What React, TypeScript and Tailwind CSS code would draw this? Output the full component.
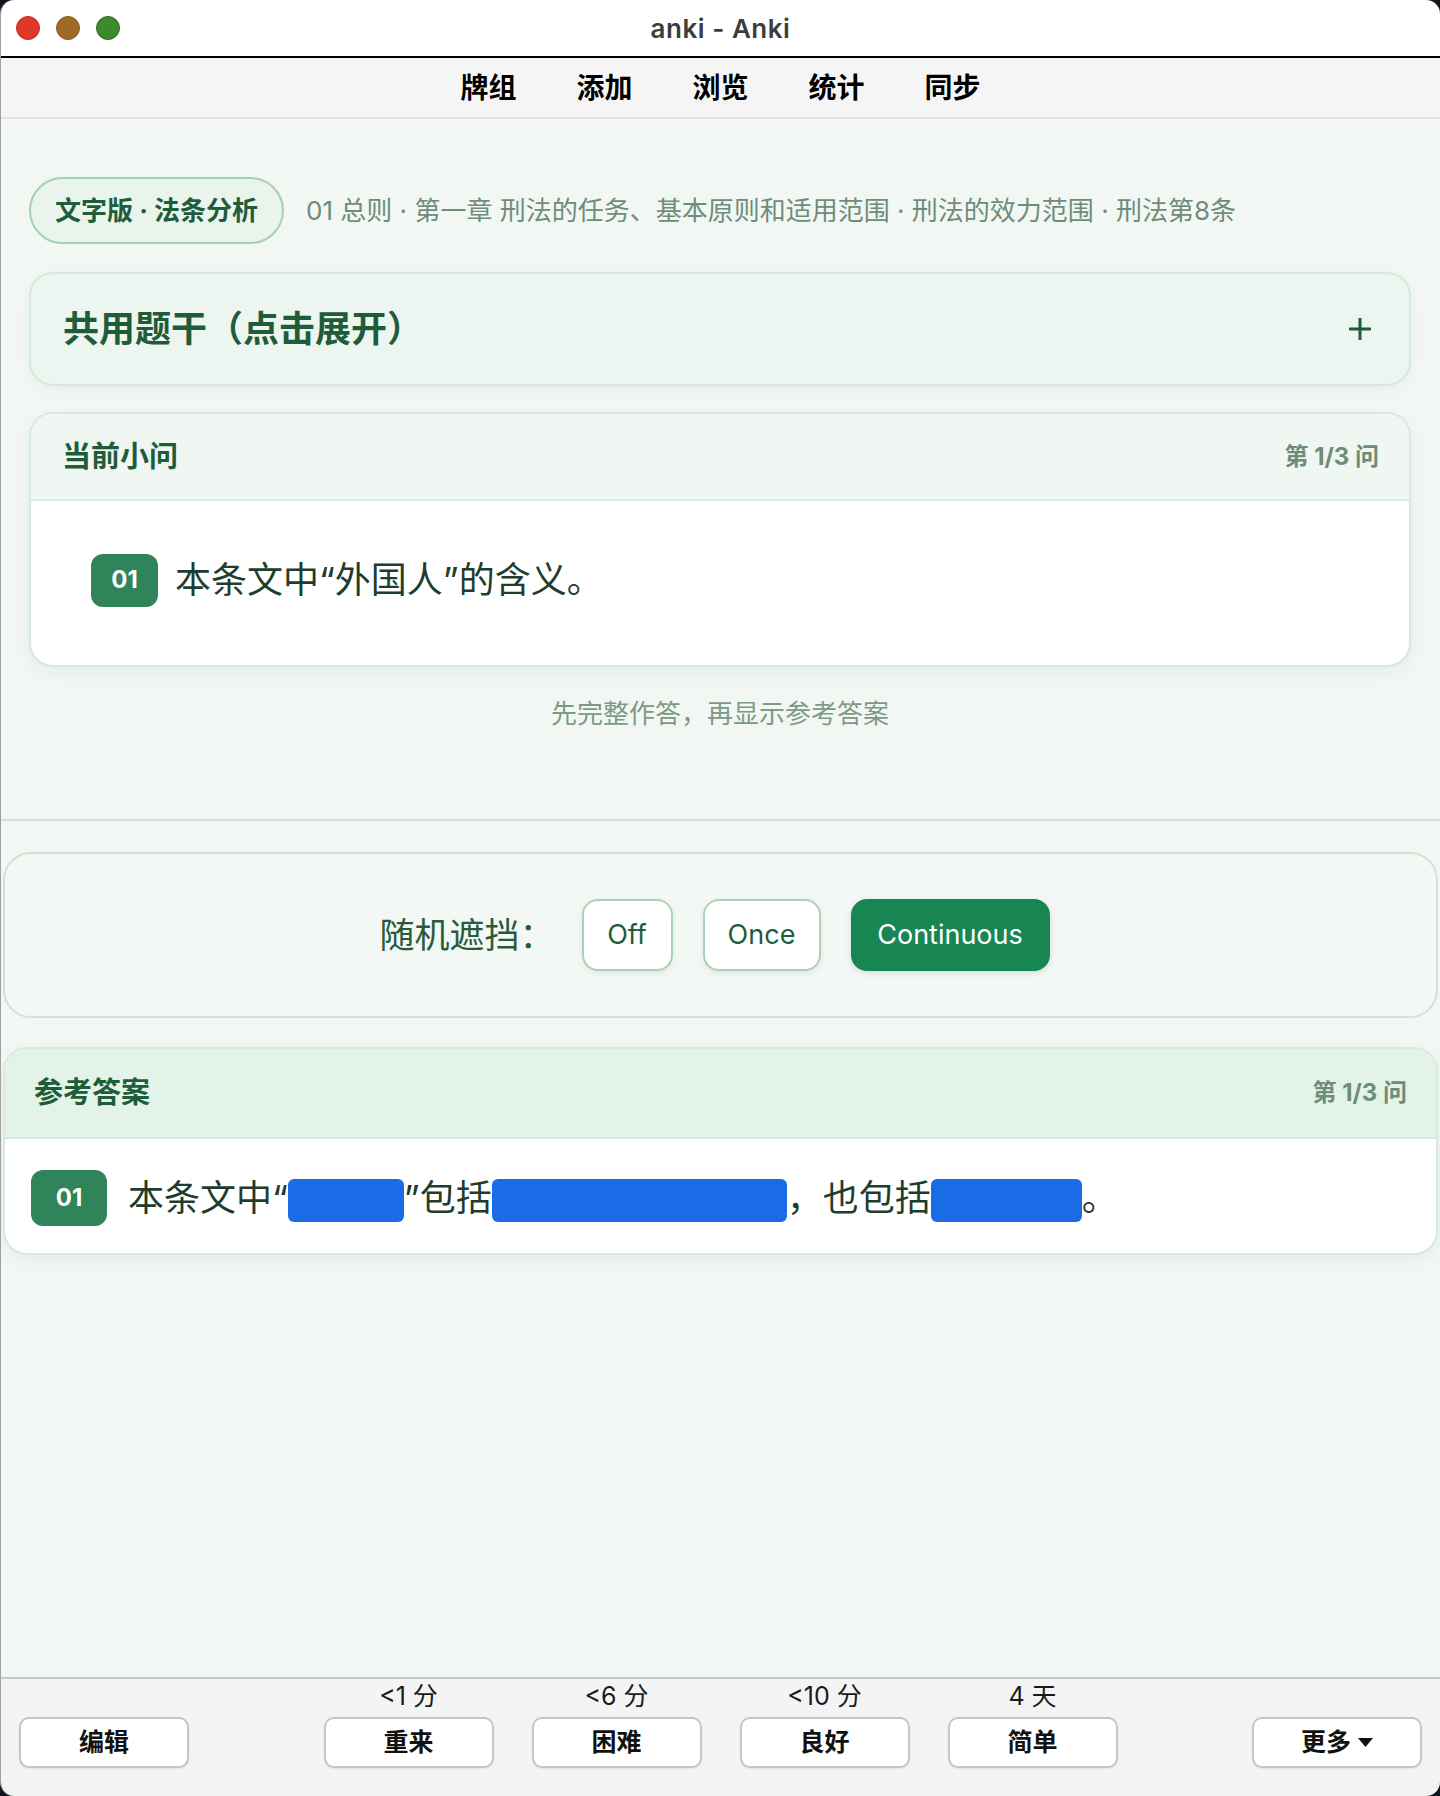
import React from "react";

const Blank = ({ w }: { w: number }) => (
  <span
    className="inline-block h-[43px] rounded-[6px] bg-[#1a6be6] align-middle"
    style={{ width: w }}
  />
);

const BottomBtn = ({ children }: { children: React.ReactNode }) => (
  <button className="flex h-[51px] w-[170px] items-center justify-center rounded-[10px] border-2 border-[#c6c6c6] bg-white text-[25px] font-bold text-[#111] shadow-[0_1px_2px_rgba(0,0,0,0.08)]">
    {children}
  </button>
);

export default function App() {
  const answers = [
    { label: "<1 分", text: "重来" },
    { label: "<6 分", text: "困难" },
    { label: "<10 分", text: "良好" },
    { label: "4 天", text: "简单" },
  ];
  return (
    <div className="h-[1796px] w-[1440px] bg-[#0f1620] font-['Inter','Noto_Sans_CJK_SC',sans-serif]">
      <div className="flex h-full flex-col overflow-hidden rounded-[14px] border-l border-[#a0a0a0]">
        {/* Title bar */}
        <div className="grid h-[56px] shrink-0 grid-cols-[1fr_auto_1fr] items-center bg-white">
          <div className="flex items-center gap-[16px] pl-[15px]">
            <span className="h-[24px] w-[24px] rounded-full border border-[#c52a20] bg-[#e0372b]" />
            <span className="h-[24px] w-[24px] rounded-full border border-[#8a5a1c] bg-[#9c6b27]" />
            <span className="h-[24px] w-[24px] rounded-full border border-[#2c6e1e] bg-[#3c8a2b]" />
          </div>
          <div className="text-[26px] font-semibold tracking-[0.02em] text-[#3d3d3d]">anki - Anki</div>
          <div />
        </div>
        <div className="h-[2px] shrink-0 bg-black" />
        {/* Toolbar */}
        <div className="flex h-[61px] shrink-0 items-center justify-center gap-[60px] border-b-2 border-[#e2e2e2] bg-[#f5f5f5] text-[28px] font-bold text-black">
          <span>牌组</span>
          <span>添加</span>
          <span>浏览</span>
          <span>统计</span>
          <span>同步</span>
        </div>

        {/* Main */}
        <div className="flex flex-1 flex-col bg-[#f2f7f3]">
          <div className="flex h-[702px] flex-col border-b-2 border-[#cfe2d6] px-[28px] pr-[29px] pt-[58px]">
            <div className="flex items-center gap-[22px]">
              <div className="flex h-[67px] items-center rounded-full border-2 border-[#a3d1b4] bg-[#e8f4ec] px-[24px] text-[26px] font-bold text-[#1f5c3a]">
                文字版 · 法条分析
              </div>
              <div className="text-[26px] text-[#6e8c7a]">
                01 总则 · 第一章 刑法的任务、基本原则和适用范围 · 刑法的效力范围 · 刑法第8条
              </div>
            </div>

            <div className="mt-[28px] flex h-[114px] items-center justify-between rounded-[24px] border-2 border-[#d6e9dd] bg-[#ecf5ef] pl-[32px] pr-[37px] shadow-[0_4px_14px_rgba(30,80,50,0.05)]">
              <div className="text-[36px] font-bold text-[#1f5c3a]">共用题干（点击展开）</div>
              <svg width="24" height="24" viewBox="0 0 24 24">
                <path d="M12 1v22M1 12h22" stroke="#1f5c3a" strokeWidth="3" />
              </svg>
            </div>

            <div className="mt-[26px] overflow-hidden rounded-[24px] border-2 border-[#d6e9dd] bg-white shadow-[0_6px_16px_rgba(30,80,50,0.06)]">
              <div className="flex h-[87px] items-center justify-between border-b-2 border-[#dcece2] bg-[#f0f7f2] pl-[31px] pr-[30px]">
                <div className="text-[29px] font-bold text-[#1f5c3a]">当前小问</div>
                <div className="text-[24px] font-bold text-[#6e8c7a]">第 1/3 问</div>
              </div>
              <div className="flex h-[164px] items-center gap-[17px] pb-[6px] pl-[60px]">
                <div className="flex h-[53px] w-[67px] items-center justify-center rounded-[12px] bg-[#2f8559] text-[24px] font-bold text-white">
                  01
                </div>
                <div className="text-[36px] leading-[48px] text-[#1e3d2d]">本条文中“外国人”的含义。</div>
              </div>
            </div>

            <div className="mt-[29px] text-center text-[26px] leading-[36px] text-[#7b9a88]">
              先完整作答，再显示参考答案
            </div>
          </div>

          {/* Random mask */}
          <div className="mx-[2px] mt-[31px] flex h-[166px] items-center justify-center rounded-[28px] border-2 border-[#cfe4d6] bg-[#f3f8f4] pr-[12px]">
            <span className="mr-[27px] text-[35px] text-[#2a5a3e]">随机遮挡：</span>
            <div className="flex items-center gap-[30px] text-[27px]">
              <button className="flex h-[72px] w-[91px] items-center justify-center rounded-[16px] border-2 border-[#a9d3b8] bg-white text-[#1f5c3a] shadow-[0_2px_6px_rgba(0,0,0,0.08)]">
                Off
              </button>
              <button className="flex h-[72px] w-[118px] items-center justify-center rounded-[16px] border-2 border-[#a9d3b8] bg-white text-[#1f5c3a] shadow-[0_2px_6px_rgba(0,0,0,0.08)]">
                Once
              </button>
              <button className="flex h-[72px] w-[199px] items-center justify-center rounded-[16px] bg-[#178653] text-white shadow-[0_2px_6px_rgba(0,0,0,0.12)]">
                Continuous
              </button>
            </div>
          </div>

          {/* Answer */}
          <div className="mx-[2px] mt-[29px] overflow-hidden rounded-[24px] border-2 border-[#d8eadf] bg-white shadow-[0_6px_16px_rgba(30,80,50,0.06)]">
            <div className="flex h-[90px] items-center justify-between border-b-2 border-[#d8eadf] bg-[#e3f3e9] pl-[29px] pr-[29px]">
              <div className="text-[29px] font-bold text-[#1f5c3a]">参考答案</div>
              <div className="text-[24px] font-bold text-[#6e8c7a]">第 1/3 问</div>
            </div>
            <div className="flex h-[114px] items-center gap-[21px] pl-[26px] pt-[4px]">
              <div className="flex h-[56px] w-[76px] shrink-0 items-center justify-center rounded-[12px] bg-[#2f8559] text-[24px] font-bold text-white">
                01
              </div>
              <div className="text-[36px] leading-[48px] text-[#1e3d2d]">
                本条文中“<Blank w={116} />”包括<Blank w={295} />，也包括<Blank w={151} />。
              </div>
            </div>
          </div>
        </div>

        {/* Bottom bar */}
        <div className="grid h-[119px] shrink-0 grid-cols-[1fr_auto_1fr] border-t-2 border-[#c9c9c9] bg-[#f4f4f4] px-[18px] pt-[3px]">
          <div className="flex items-start pt-[35px]">
            <BottomBtn>编辑</BottomBtn>
          </div>
          <div className="flex gap-[38px]">
            {answers.map((a) => (
              <div key={a.text} className="flex flex-col items-center">
                <div className="h-[28px] text-[25px] leading-[28px] text-[#1a1a1a]">{a.label}</div>
                <div className="mt-[7px]">
                  <BottomBtn>{a.text}</BottomBtn>
                </div>
              </div>
            ))}
          </div>
          <div className="flex items-start justify-end pt-[35px]">
            <BottomBtn>
              <span className="flex items-center gap-[7px]">
                更多
                <svg width="15" height="9" viewBox="0 0 15 9">
                  <polygon points="0,0 15,0 7.5,9" fill="#111" />
                </svg>
              </span>
            </BottomBtn>
          </div>
        </div>
      </div>
    </div>
  );
}
